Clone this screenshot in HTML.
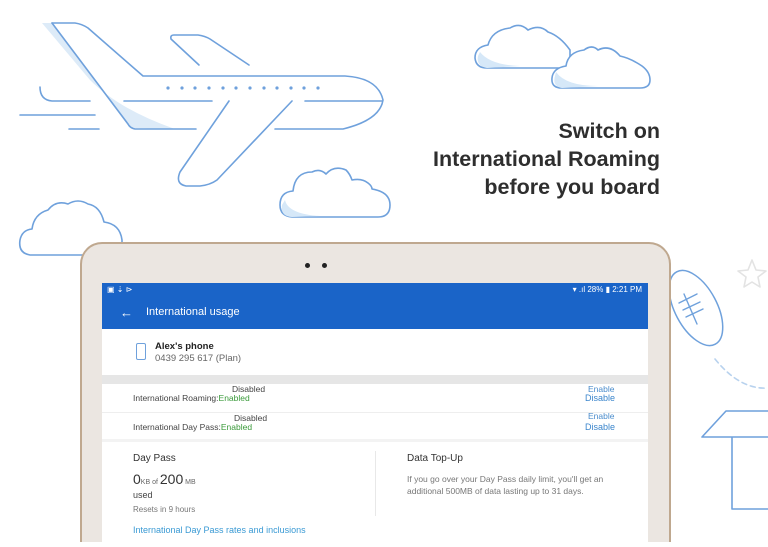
<!DOCTYPE html>
<html><head><meta charset="utf-8"><style>
*{margin:0;padding:0;box-sizing:border-box}
html,body{width:768px;height:547px;overflow:hidden}
body{background:#fff;position:relative;font-family:"Liberation Sans",sans-serif}
.abs{position:absolute}
svg.bg{position:absolute;left:0;top:0}
.head{right:108px;text-align:right;font-size:21.5px;font-weight:bold;color:#2e2e2e;line-height:28px;top:117px}
.frame{left:80px;top:242px;width:591px;height:300px;background:#ebe6e1;border:2px solid #bfa88f;border-bottom:none;border-radius:22px 22px 0 0}
.screen{left:102px;top:283px;width:546px;height:264px;background:#fff;overflow:hidden}
.bar{position:absolute;left:0;top:0;width:546px;height:46px;background:#1a64c8;color:#fff}
.t{position:absolute;white-space:nowrap}
</style></head><body>
<svg class="bg" width="768" height="547" fill="none" stroke="#6fa1dc" stroke-width="1.6" stroke-linecap="round" stroke-linejoin="round">
<path d="M42,23 L52,23 L130,128 L175,129 Q120,110 90,80 Z" fill="#ddebf8" stroke="none"/>
<path d="M52,23 L75,23 Q82,24 88,28 L143,76 L345,76 Q378,78 383,100 Q380,120 343,129 L275,129"/>
<path d="M196,129 L135,129 Q130,128 128,124 L52,23"/>
<path d="M124,101 L212,101 M305,101 L382,101"/>
<path d="M199,65 L171,39 Q170,35 174,35 L198,35 Q205,36 210,39 L249,65"/>
<path d="M229,101 L180,172 Q175,184 186,186 L200,186 Q210,185 217,180 L292,101"/>
<path d="M40,87 Q40,100 52,101 L90,101 M20,115 L95,115 M69,129 L99,129"/>
<g fill="#6fa1dc" stroke="none">
<circle cx="168" cy="88" r="1.6"/><circle cx="182" cy="88" r="1.6"/><circle cx="195" cy="88" r="1.6"/><circle cx="209" cy="88" r="1.6"/><circle cx="223" cy="88" r="1.6"/><circle cx="236" cy="88" r="1.6"/><circle cx="250" cy="88" r="1.6"/><circle cx="264" cy="88" r="1.6"/><circle cx="277" cy="88" r="1.6"/><circle cx="291" cy="88" r="1.6"/><circle cx="304" cy="88" r="1.6"/><circle cx="318" cy="88" r="1.6"/></g>
<g fill="#fff">
<path d="M292,217 Q280,216 280,205 Q280,192 293,191 Q295,172 312,172 Q320,168 326,174 Q334,165 346,170 Q350,174 352,180 Q362,178 368,183 Q372,186 372,189 Q390,192 390,205 Q390,217 378,217 Z"/>
<path d="M30,255 Q18,253 20,240 Q22,230 32,229 Q34,214 48,210 Q56,200 68,204 Q78,198 88,204 Q100,206 104,222 Q120,224 122,240 L122,255 Z"/>
<path d="M487,68 Q476,68 475,58 Q475,47 488,45 Q492,30 510,28 Q520,22 528,30 Q540,24 548,32 Q560,36 570,50 L570,68 Z"/>
<path d="M562,88 Q551,88 552,78 Q553,68 566,66 Q568,52 584,50 Q592,44 598,50 Q610,44 620,56 Q630,58 642,66 Q650,72 650,80 Q650,88 640,88 Z"/>
</g>
<path d="M285,200 Q288,214 320,216 L292,217 Q280,216 282,205Z M480,52 Q490,65 520,66 L487,68 Q476,66 478,56Z M556,72 Q566,86 598,86 L562,88 Q552,86 555,76Z" fill="#d6e8f8" stroke="none"/>
<ellipse cx="696" cy="308" rx="21" ry="41" transform="rotate(-28 696 308)" stroke-width="1.5" fill="#fff"/>
<path d="M679,303 L697,294 M683,310 L700,302 M686,317 L703,309 M684,294 L697,324" stroke-width="1.4"/>
<path d="M715,359 Q740,390 768,388" stroke-dasharray="5 4" stroke="#b8d2ee"/>
<path d="M752,260 l4,10 l10,1 l-8,6 l2,10 l-8,-5 l-8,5 l2,-10 l-8,-6 l10,-1z" stroke="#e3e3e3"/>
<path d="M702,437 L726,411 L768,411 M702,437 L768,437 M732,437 L732,509 L768,509" stroke-width="1.6"/>
</svg>
<div class="abs head">Switch on<br>International Roaming<br>before you board</div>
<div class="abs frame"></div>
<div class="abs" style="left:305px;top:263px;width:5px;height:5px;border-radius:50%;background:#222"></div>
<div class="abs" style="left:322px;top:263px;width:5px;height:5px;border-radius:50%;background:#222"></div>
<div class="abs screen">
<div class="bar">
<div class="t" style="left:5px;top:2px;font-size:8px">▣ ⇣ ⊳</div>
<div class="t" style="right:6px;top:2px;font-size:8px">▾ .ıl 28% ▮ 2:21 PM</div>
<div class="t" style="left:18px;top:22px;font-size:13px">←</div>
<div class="t" style="left:44px;top:23px;font-size:11px">International usage</div>
</div>
<div class="t" style="left:34px;top:60px;width:10px;height:17px;border:1.5px solid #6fa1dc;border-radius:2px"></div>
<div class="t" style="left:53px;top:58px;font-size:9.5px;font-weight:bold;color:#222">Alex's phone</div>
<div class="t" style="left:53px;top:70px;font-size:9.5px;color:#666">0439 295 617 (Plan)</div>
<div class="t" style="left:0;top:92px;width:546px;height:9px;background:#e6e6e6"></div>
<div class="t" style="left:130px;top:101px;font-size:8.5px;color:#444">Disabled</div>
<div class="t" style="left:31px;top:110px;font-size:8.5px;color:#444">International Roaming:<span style="color:#3a9a3a">Enabled</span></div>
<div class="t" style="left:486px;top:101px;font-size:8.5px;color:#4a8ccc">Enable</div>
<div class="t" style="left:483px;top:110px;font-size:9px;color:#3a85cc">Disable</div>
<div class="t" style="left:0;top:129px;width:546px;height:1px;background:#eee"></div>
<div class="t" style="left:132px;top:130px;font-size:8.5px;color:#444">Disabled</div>
<div class="t" style="left:31px;top:139px;font-size:8.5px;color:#444">International Day Pass:<span style="color:#3a9a3a">Enabled</span></div>
<div class="t" style="left:486px;top:128px;font-size:8.5px;color:#4a8ccc">Enable</div>
<div class="t" style="left:483px;top:139px;font-size:9px;color:#3a85cc">Disable</div>
<div class="t" style="left:0;top:156px;width:546px;height:3px;background:#f3f3f3"></div>
<div class="t" style="left:31px;top:170px;font-size:10px;color:#333">Day Pass</div>
<div class="t" style="left:31px;top:188px;font-size:14px;color:#333">0<span style="font-size:7px;color:#666">KB of </span>200<span style="font-size:7px;color:#666"> MB</span></div>
<div class="t" style="left:31px;top:207px;font-size:9px;color:#444">used</div>
<div class="t" style="left:31px;top:222px;font-size:8px;color:#777">Resets in 9 hours</div>
<div class="t" style="left:31px;top:242px;font-size:9px;color:#3a9ad4">International Day Pass rates and inclusions</div>
<div class="t" style="left:273px;top:168px;width:1px;height:65px;background:#e8e8e8"></div>
<div class="t" style="left:305px;top:170px;font-size:10px;color:#333">Data Top-Up</div>
<div class="t" style="left:305px;top:191px;font-size:8.5px;color:#777;line-height:11.5px;white-space:normal;width:215px">If you go over your Day Pass daily limit, you'll get an additional 500MB of data lasting up to 31 days.</div>
</div>
</body></html>
